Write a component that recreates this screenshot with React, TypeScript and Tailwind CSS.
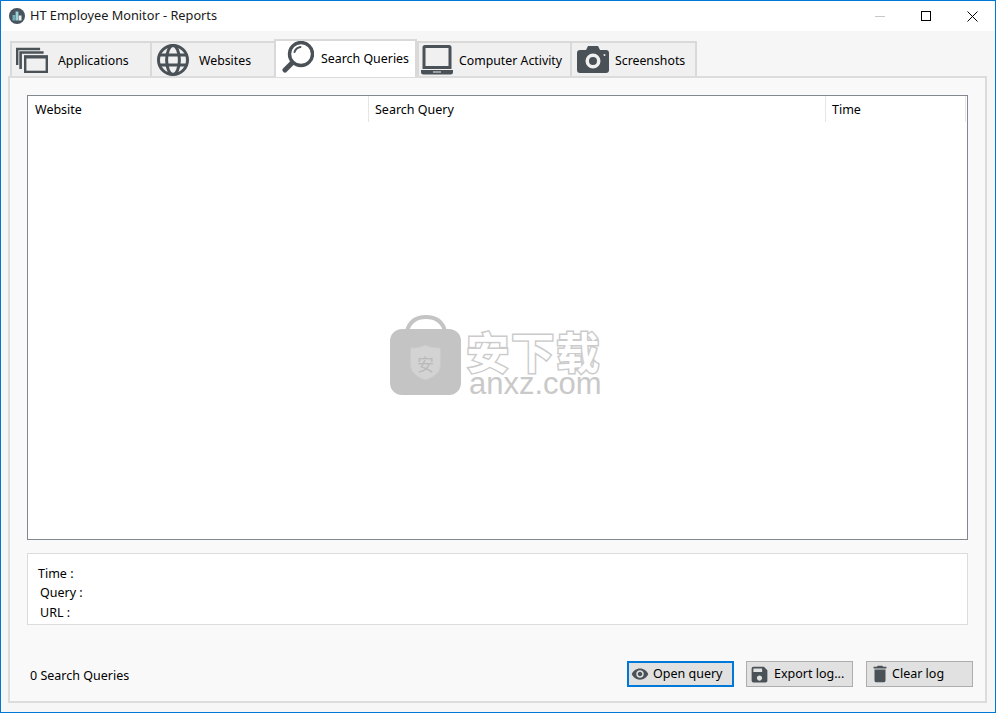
import { ReactNode } from 'react'
import { MdDelete, MdRemoveRedEye, MdSave } from 'react-icons/md'

const ICON = '#4a5157'

function AppsIcon() {
    return (
        <svg width="32" height="26" viewBox="0 0 32 26" fill="none" stroke={ICON} strokeWidth="2.2">
            <path d="M1.100 18V2h23" strokeWidth="2.600" />
            <path d="M4.600 22V5.500h23" strokeWidth="2.600" />
            <rect x="9.200" y="9.500" width="21.600" height="15.400" strokeWidth="2.400" />
            <path d="M8 10h24" strokeWidth="3" />
        </svg>
    )
}

function GlobeIcon() {
    return (
        <svg width="32" height="32" viewBox="0 0 32 32" fill="none" stroke={ICON} strokeWidth="3">
            <circle cx="16" cy="16" r="14.500" />
            <ellipse cx="16" cy="16" rx="6.400" ry="14.500" />
            <path d="M2.500 11h27M2.500 21h27" />
        </svg>
    )
}

function SearchIcon() {
    return (
        <svg width="32" height="32" viewBox="0 0 32 32" fill="none" stroke={ICON}>
            <circle cx="19" cy="13" r="11.500" strokeWidth="3.400" />
            <path d="M12.500 11a7.500 7.500 0 0 1 6-5" strokeWidth="2" strokeLinecap="round" />
            <path d="M10 22 3 29" strokeWidth="5" strokeLinecap="round" />
        </svg>
    )
}

function LaptopIcon() {
    return (
        <svg width="32" height="30" viewBox="0 0 32 30" fill={ICON}>
            <path fillRule="evenodd" d="M4 0h24a2.500 2.500 0 0 1 2.500 2.500V24h-29V2.500A2.500 2.500 0 0 1 4 0Zm.5 3v18h23V3Z" />
            <path fillRule="evenodd" d="M0 25h32v2a2.500 2.500 0 0 1-2.500 2.500h-27A2.500 2.500 0 0 1 0 27Zm12 1.500v1h8v-1Z" />
        </svg>
    )
}

function CameraIcon() {
    return (
        <svg width="32" height="27" viewBox="0 0 32 27" fill={ICON}>
            <path
                fillRule="evenodd"
                d="M3 4h6l2-4h10l2 4h6a3 3 0 0 1 3 3v17a3 3 0 0 1-3 3H3a3 3 0 0 1-3-3V7a3 3 0 0 1 3-3Zm13 3.500a7.500 7.500 0 1 0 0 15 7.500 7.500 0 0 0 0-15Zm0 3.500a4 4 0 1 1 0 8 4 4 0 0 1 0-8Zm11.500-3a1 1 0 1 0 0 2 1 1 0 0 0 0-2Z"
            />
        </svg>
    )
}

function Tab({ icon, label, width, iconBox, active }: { icon: ReactNode; label: string; width: string; iconBox: string; active?: boolean }) {
    if (active) {
        return (
            <div className={`${width} relative z-10 h-[38px] -mb-[1px] -ml-[1px] flex items-center bg-white border-2 border-b-0 border-[#d9d9d9] text-[12.4px] text-black`}>
                <div className={`${iconBox} h-full pb-[5px] flex items-center justify-center`}>{icon}</div>
                <span className="pt-[1px]">{label}</span>
            </div>
        )
    }
    return (
        <div className={`${width} h-[35px] flex items-center bg-[#f0f0f0] border-2 border-b-0 border-r-0 border-[#d9d9d9] text-[12.3px] text-black`}>
            <div className={`${iconBox} flex items-center justify-center`}>{icon}</div>
            <span className="pt-[4px]">{label}</span>
        </div>
    )
}

function ActionButton({ icon, label, focused, iconBox, className }: { icon: ReactNode; label: string; focused?: boolean; iconBox: string; className?: string }) {
    return (
        <button
            className={`w-[107px] h-[26px] flex items-center bg-[#e1e1e1] text-black ${className ?? ''} ${
                focused ? 'border-2 border-[#0078d7]' : 'border border-[#adadad]'
            }`}
        >
            <span className={`${iconBox} flex items-center justify-center`}>{icon}</span>
            <span>{label}</span>
        </button>
    )
}

function Watermark() {
    return (
        <div className="absolute left-[389px] top-[313px] flex items-start gap-[4px] pointer-events-none">
            <svg width="72" height="81" viewBox="0 0 72 81">
                <path d="M17 17C20 6 27 3 36 3s16 3 19 14" fill="none" stroke="#c4c4c4" strokeWidth="4" />
                <rect x="0" y="15" width="71" height="66" rx="12" fill="#c4c4c4" />
                <path d="M20.500 34c6 0 11-1 15-3 4 2 9 3 15 3v17c0 8-8 13-15 15-7-2-15-7-15-15Z" fill="#d3d3d3" stroke="#cacaca" />
                <text x="35.500" y="57" textAnchor="middle" fontSize="17" fill="#bababa" fontFamily="'Noto Sans CJK SC', sans-serif">安</text>
            </svg>
            <div className="flex flex-col items-center mt-[15px]">
                <div className="h-[42px] leading-[42px] text-[43px] font-bold text-white tracking-[2px] [font-family:'Noto_Sans_CJK_SC',sans-serif] [-webkit-text-stroke:3px_#cbcbcb] [paint-order:stroke]">
                    安下载
                </div>
                <div className="ml-[3px] -mt-[1px] h-[27px] leading-[27px] text-[31px] text-[#c9c9c9] [font-family:'Liberation_Sans',sans-serif]">anxz.com</div>
            </div>
        </div>
    )
}

export default function App() {
    return (
        <div className="w-[996px] h-[713px] relative flex flex-col border border-[#0078d7] bg-[#f6f6f6] text-[12.5px] overflow-hidden [font-family:'Noto_Sans','Open_Sans',sans-serif]">
            <div className="h-[30px] shrink-0 bg-white flex items-center">
                <svg className="ml-[8px]" width="16" height="16" viewBox="0 0 16 16">
                    <circle cx="8" cy="8" r="8" fill="#47535f" />
                    <rect x="3.500" y="7" width="2.800" height="5.500" fill="#6fb0b8" />
                    <rect x="6.600" y="3.500" width="2.800" height="9" fill="#9fd0d2" />
                    <rect x="9.700" y="7.500" width="2.800" height="5" fill="#e8eeee" />
                </svg>
                <span className="ml-[5px] text-[12.75px] text-[#1a1a1a]">HT Employee Monitor - Reports</span>
                <div className="ml-auto flex items-center">
                    <div className="w-[10px] h-[1px] bg-[#c8c8c8] mr-[36px]" />
                    <div className="w-[10px] h-[10px] border border-black mr-[36px]" />
                    <svg className="mr-[17px]" width="11" height="11" viewBox="0 0 11 11" stroke="#000" strokeWidth="1">
                        <path d="M.5.5l10 10M10.500.5l-10 10" />
                    </svg>
                </div>
            </div>

            <div className="flex-1 flex flex-col pl-[7px] pr-[8px] pb-[9px]">
                <div className="h-[45px] shrink-0 flex items-end pl-[2px]">
                    <Tab width="w-[140px]" iconBox="w-[46px] pr-[6px]" icon={<AppsIcon />} label="Applications" />
                    <Tab width="w-[125px]" iconBox="w-[47px] pr-[5px]" icon={<GlobeIcon />} label="Websites" />
                    <Tab width="w-[143px]" iconBox="w-[45px] pr-[1px]" icon={<SearchIcon />} label="Search Queries" active />
                    <Tab width="w-[153px]" iconBox="w-[40px] pr-[4px]" icon={<LaptopIcon />} label="Computer Activity" />
                    <div className="border-r-2 border-[#d9d9d9]">
                        <Tab width="w-[125px]" iconBox="w-[43px] pr-[1px]" icon={<CameraIcon />} label="Screenshots" />
                    </div>
                </div>

                <div className="flex-1 flex flex-col border-2 border-[#dcdcdc] bg-[#f9f9f9] px-[17px] pt-[17px] pb-[14px]">
                    <div className="h-[445px] shrink-0 bg-white border border-[#828790]">
                        <div className="h-[26px] flex items-center text-black">
                            <div className="w-[341px] h-full pl-[7px] pt-[2px] flex items-center border-r border-[#e5e5e5]">Website</div>
                            <div className="w-[457px] h-full pl-[6px] pt-[2px] flex items-center border-r border-[#e5e5e5]">Search Query</div>
                            <div className="w-[140px] h-full pl-[6px] pt-[2px] flex items-center border-r border-[#e5e5e5]">Time</div>
                        </div>
                    </div>

                    <div className="mt-[13px] h-[72px] shrink-0 bg-white border border-[#dcdcdc] pt-[10px] text-black">
                        <div className="pl-[10px] h-[19px] leading-[19px]">Time :</div>
                        <div className="pl-[12px] h-[20px] leading-[20px]">Query :</div>
                        <div className="pl-[12px] h-[19px] leading-[19px]">URL :</div>
                    </div>

                    <div className="flex-1 flex items-end -mr-[5px]">
                        <span className="ml-[3px] mb-[1px] text-black">0 Search Queries</span>
                        <div className="ml-auto flex gap-[12px]">
                            <ActionButton focused iconBox="w-[24px] pr-[2px]" icon={<MdRemoveRedEye size={18} color={ICON} />} label="Open query" />
                            <ActionButton className="mr-[1px]" iconBox="w-[27px] pr-[3px]" icon={<MdSave size={21} color={ICON} />} label="Export log..." />
                            <ActionButton iconBox="w-[25px]" icon={<MdDelete size={22} color={ICON} />} label="Clear log" />
                        </div>
                    </div>
                </div>
            </div>

            <Watermark />
        </div>
    )
}
